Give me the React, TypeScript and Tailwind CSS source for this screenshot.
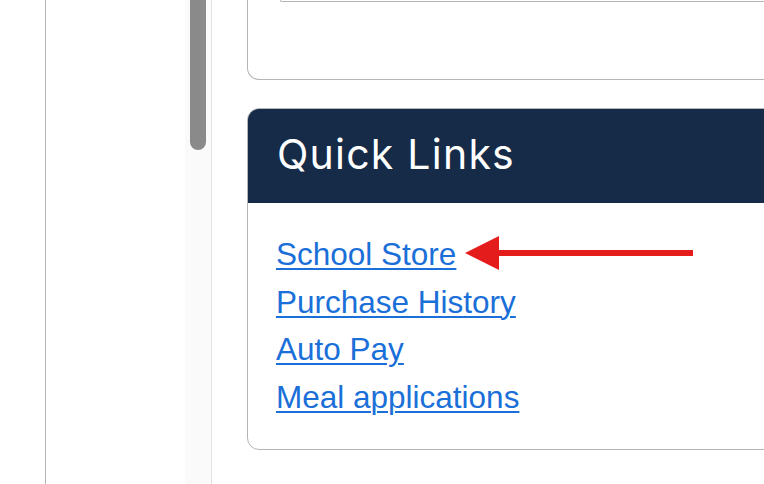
import { type ReactNode } from 'react'

const links = ['School Store', 'Purchase History', 'Auto Pay', 'Meal applications']

function Sidebar() {
    return (
        <div className="flex shrink-0">
            <div className="w-[46px] border-r border-[#b5b5b5]" />
            <div className="w-[139px] bg-white" />
            <div className="w-[27px] bg-[#fafafa] border-r border-[#e3e3e3] px-[5px]">
                <div className="h-[160px] -mt-[10px] rounded-full bg-[#8a8a8a]" />
            </div>
        </div>
    )
}

function Card({ children }: { children: ReactNode }) {
    return <div className="border border-[#b5b5b5] rounded-xl overflow-hidden bg-white">{children}</div>
}

function Arrow() {
    return (
        <svg className="absolute left-[217px] top-[32px]" width="230" height="36" viewBox="0 0 230 36">
            <path d="M0 18 L34 1 L34 35 Z" fill="#e41c1c" />
            <rect x="30" y="15" width="198" height="6" fill="#e41c1c" />
        </svg>
    )
}

export default function App() {
    return (
        <div className="flex min-h-[484px] bg-white" style={{ fontFamily: '"Liberation Sans", Arial, sans-serif' }}>
            <Sidebar />
            <main className="flex-1 pl-[35px] overflow-hidden">
                <div className="-mr-[40px] h-[80px] border-x border-b border-[#b5b5b5] rounded-b-xl pl-[32px]">
                    <div className="h-[2px] border-l border-b border-[#b5b5b5] rounded-bl-md" />
                </div>

                <div className="mt-[28px] -mr-[40px]">
                    <Card>
                        <div className="h-[94px] bg-[#152b47] px-[29px] pb-[4px] flex items-center">
                            <h2
                                className="text-white text-[41px] leading-none tracking-[0.03em]"
                                style={{ fontFamily: 'Inter, "Open Sans", sans-serif' }}
                            >
                                Quick Links
                            </h2>
                        </div>
                        <div className="relative px-[28px] pt-[28px] pb-[28px]">
                            <ul className="flex flex-col">
                                {links.map(link => (
                                    <li key={link} className="text-[31.5px] leading-[47.5px]">
                                        <a href="#" className="text-[#1b6fd8] underline underline-offset-[3px] decoration-2">
                                            {link}
                                        </a>
                                    </li>
                                ))}
                            </ul>
                            <Arrow />
                        </div>
                    </Card>
                </div>
            </main>
        </div>
    )
}
